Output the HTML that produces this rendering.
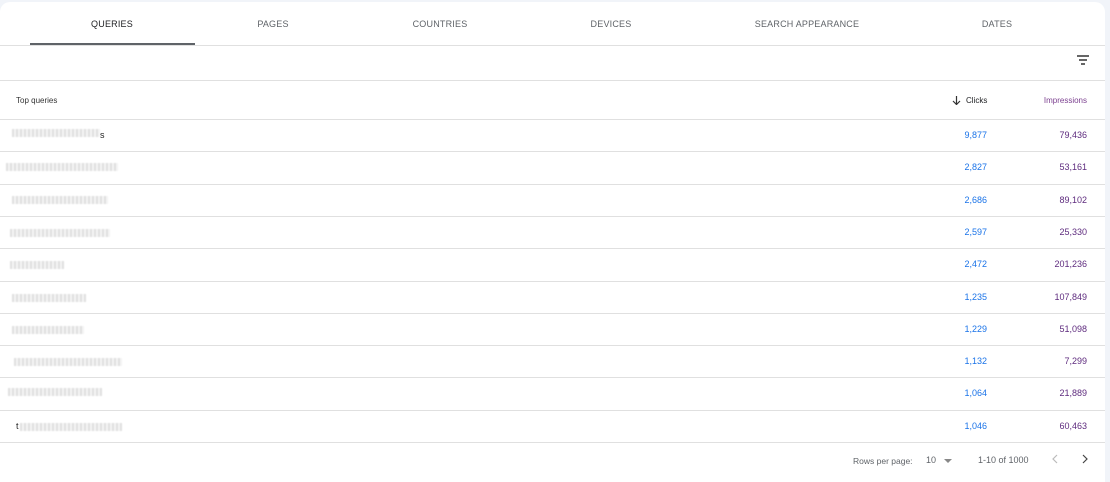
<!DOCTYPE html>
<html><head><style>
*{margin:0;padding:0;box-sizing:border-box}
body{width:1110px;height:474px;background:#f1f4f9;font-family:"Liberation Sans",sans-serif;overflow:hidden;position:relative}
.card{position:absolute;left:0;top:2px;width:1105px;height:480px;background:#fff;border-radius:10px 10px 0 0}
.tabs{position:absolute;left:0;top:0;width:1105px;height:44px;border-bottom:1px solid #e0e0e0}
.tab{position:absolute;top:17px;font-size:9px;color:#5f6368;letter-spacing:.2px;transform:translateX(-50%)}
.ind{position:absolute;left:30px;top:41px;width:165px;height:2px;background:#5f6368}
.hl{position:absolute;left:0;width:1105px;height:1px;background:#e0e0e0}
.t{position:absolute;font-size:9px}
.c{color:#1a73e8;text-align:right;width:60px;left:927px}
.i{color:#5e2b7e;text-align:right;width:80px;left:1007px}
.q{position:absolute;height:8px;background:repeating-linear-gradient(90deg,#ddd 0 2px,#f3f3f3 2px 4px);filter:blur(.6px);opacity:.9}
</style></head><body>
<div class="card">
<div class="tabs">
<span class="tab" style="left:112px;color:#202124">QUERIES</span>
<span class="tab" style="left:273px">PAGES</span>
<span class="tab" style="left:440px">COUNTRIES</span>
<span class="tab" style="left:611px">DEVICES</span>
<span class="tab" style="left:807px">SEARCH APPEARANCE</span>
<span class="tab" style="left:997px">DATES</span>
<div class="ind"></div>
</div>
<svg style="position:absolute;left:1077px;top:53px" width="12" height="10"><path d="M0 1h12M2 5h8M4 9h4" stroke="#333" stroke-width="1.4"/></svg>
<div class="hl" style="top:78px"></div>
<span class="t" style="left:16px;top:94px;font-size:8px;color:#333">Top queries</span>
<svg style="position:absolute;left:952px;top:94px" width="9" height="9"><path d="M4.5 0v8M1 5l3.5 3.5L8 5" stroke="#333" stroke-width="1.2" fill="none"/></svg>
<span class="t" style="left:966px;top:94px;font-size:8px;color:#202124">Clicks</span>
<span class="t" style="left:1007px;top:94px;font-size:8px;width:80px;text-align:right;color:#7b3f8f">Impressions</span>
<div class="hl" style="top:117px"></div>
<div class="q" style="left:12px;top:127px;width:88px"></div><span class="t" style="left:100px;top:128px;color:#222">s</span>
<span class="t c" style="top:128px">9,877</span><span class="t i" style="top:128px">79,436</span>
<div class="hl" style="top:149px"></div>
<div class="q" style="left:6px;top:161px;width:112px"></div>
<span class="t c" style="top:160px">2,827</span><span class="t i" style="top:160px">53,161</span>
<div class="hl" style="top:182px"></div>
<div class="q" style="left:12px;top:194px;width:96px"></div>
<span class="t c" style="top:193px">2,686</span><span class="t i" style="top:193px">89,102</span>
<div class="hl" style="top:214px"></div>
<div class="q" style="left:10px;top:227px;width:100px"></div>
<span class="t c" style="top:225px">2,597</span><span class="t i" style="top:225px">25,330</span>
<div class="hl" style="top:246px"></div>
<div class="q" style="left:10px;top:259px;width:54px"></div>
<span class="t c" style="top:257px">2,472</span><span class="t i" style="top:257px">201,236</span>
<div class="hl" style="top:279px"></div>
<div class="q" style="left:12px;top:292px;width:74px"></div>
<span class="t c" style="top:290px">1,235</span><span class="t i" style="top:290px">107,849</span>
<div class="hl" style="top:311px"></div>
<div class="q" style="left:12px;top:324px;width:72px"></div>
<span class="t c" style="top:322px">1,229</span><span class="t i" style="top:322px">51,098</span>
<div class="hl" style="top:343px"></div>
<div class="q" style="left:14px;top:356px;width:108px"></div>
<span class="t c" style="top:354px">1,132</span><span class="t i" style="top:354px">7,299</span>
<div class="hl" style="top:375px"></div>
<div class="q" style="left:8px;top:386px;width:94px"></div>
<span class="t c" style="top:386px">1,064</span><span class="t i" style="top:386px">21,889</span>
<div class="hl" style="top:408px"></div>
<span class="t" style="left:16px;top:419px;color:#222">t</span><div class="q" style="left:20px;top:421px;width:102px"></div>
<span class="t c" style="top:419px">1,046</span><span class="t i" style="top:419px">60,463</span>
<div class="hl" style="top:440px"></div>
<span class="t" style="left:853px;top:454px;font-size:8.5px;color:#5f6368">Rows per page:</span>
<span class="t" style="left:926px;top:453px;color:#5f6368">10</span>
<svg style="position:absolute;left:944px;top:457px" width="8" height="5"><path d="M0 0h8L4 4z" fill="#888"/></svg>
<span class="t" style="left:978px;top:453px;color:#5f6368">1-10 of 1000</span>
<svg style="position:absolute;left:1052px;top:452px" width="6" height="10"><path d="M5 1L1 5l4 4" stroke="#bbb" stroke-width="1.2" fill="none"/></svg>
<svg style="position:absolute;left:1082px;top:452px" width="6" height="10"><path d="M1 1l4 4-4 4" stroke="#444" stroke-width="1.2" fill="none"/></svg>
</div>
</body></html>
